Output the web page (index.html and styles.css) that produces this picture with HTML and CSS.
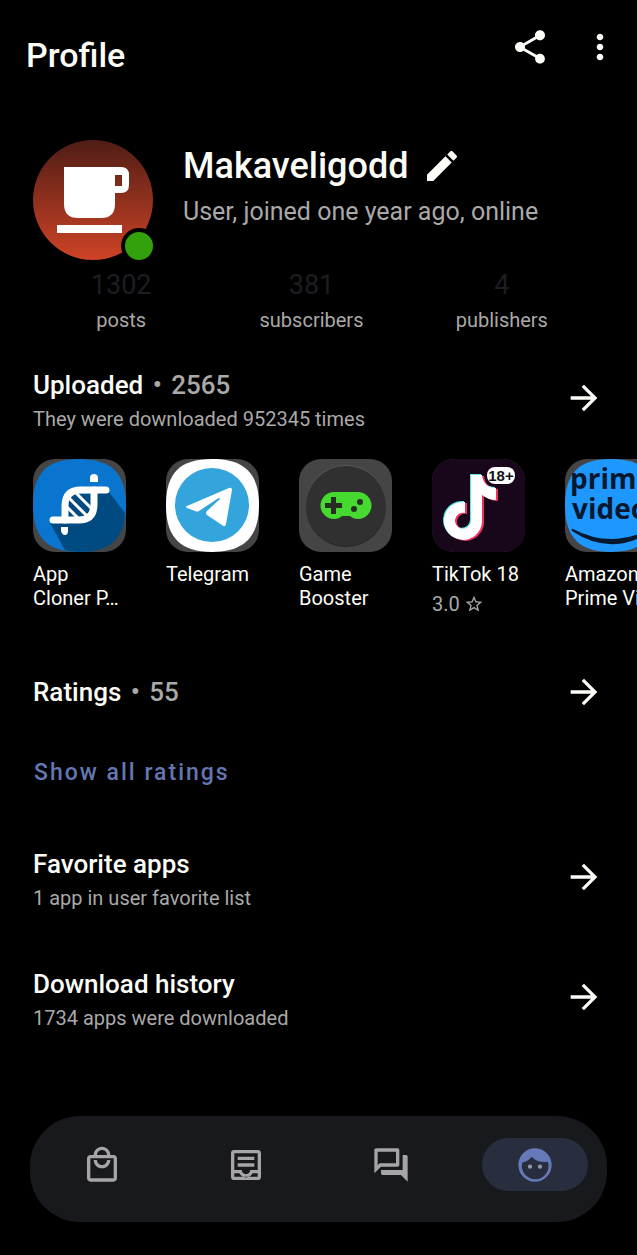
FILE: index.html
```html
<!DOCTYPE html>
<html lang="en">
<head>
  <meta charset="UTF-8">
  <meta name="viewport" content="width=device-width, initial-scale=1.0">
  <title>Profile</title>
  <link rel="stylesheet" href="styles.css">
</head>
<body>
  <header class="topbar">
    <h1>Profile</h1>
    <button class="icon-button" aria-label="Share">
      <svg class="icon" viewBox="0 0 24 24"><path d="M18 16.08c-.76 0-1.44.3-1.96.77L8.91 12.7c.05-.23.09-.46.09-.7s-.04-.47-.09-.7l7.05-4.11c.54.5 1.25.81 2.04.81 1.66 0 3-1.34 3-3s-1.34-3-3-3-3 1.34-3 3c0 .24.04.47.09.7L8.04 9.81C7.5 9.31 6.79 9 6 9c-1.66 0-3 1.34-3 3s1.34 3 3 3c.79 0 1.5-.31 2.04-.81l7.12 4.16c-.05.21-.08.43-.08.65 0 1.61 1.31 2.92 2.92 2.92s2.92-1.31 2.92-2.92-1.31-2.92-2.92-2.92z"/></svg>
    </button>
    <button class="icon-button" aria-label="More options">
      <svg class="icon" viewBox="0 0 24 24"><path d="M12 8c1.1 0 2-.9 2-2s-.9-2-2-2-2 .9-2 2 .9 2 2 2zm0 2c-1.1 0-2 .9-2 2s.9 2 2 2 2-.9 2-2-.9-2-2-2zm0 6c-1.1 0-2 .9-2 2s.9 2 2 2 2-.9 2-2-.9-2-2-2z"/></svg>
    </button>
  </header>

  <main>
    <section class="user">
      <div class="avatar">
        <svg viewBox="0 0 120 120">
          <defs>
            <linearGradient id="avatar-bg" x1="0" y1="0" x2="0" y2="1">
              <stop offset="0" stop-color="#4f1d15"/>
              <stop offset="1" stop-color="#cf4326"/>
            </linearGradient>
          </defs>
          <circle cx="60" cy="60" r="60" fill="url(#avatar-bg)"/>
          <path fill="#fff" fill-rule="evenodd" d="M31 27H88Q96 27 96 35V45Q96 53 88 53H82V64Q82 78 68 78H45Q31 78 31 64ZM82 35V46H89V35Z"/>
          <path fill="#fff" d="M24 85h65v8H24z"/>
        </svg>
        <span class="online"></span>
      </div>
      <div class="user-text">
        <div class="name-row">
          <h2>Makaveligodd</h2>
          <button class="icon-button" aria-label="Edit name">
            <svg class="icon" viewBox="0 0 24 24"><path d="M3 17.25V21h3.75L17.81 9.94l-3.75-3.75L3 17.25zM20.71 7.04c.39-.39.39-1.02 0-1.41l-2.34-2.34c-.39-.39-1.02-.39-1.41 0l-1.83 1.83 3.75 3.75 1.83-1.83z"/></svg>
          </button>
        </div>
        <p>User, joined one year ago, online</p>
      </div>
    </section>

    <section class="stats">
      <div><strong>1302</strong><span>posts</span></div>
      <div><strong>381</strong><span>subscribers</span></div>
      <div><strong>4</strong><span>publishers</span></div>
    </section>

    <section class="row">
      <div>
        <h3>Uploaded <span>•</span> <span>2565</span></h3>
        <p>They were downloaded 952345 times</p>
      </div>
      <button class="icon-button" aria-label="Open uploaded apps">
        <svg class="icon" viewBox="0 0 24 24"><path d="M12 4l-1.41 1.41L16.17 11H4v2h12.17l-5.58 5.59L12 20l8-8z"/></svg>
      </button>
    </section>

    <section class="apps">
      <a class="app" href="#">
        <svg class="app-icon" viewBox="0 0 93 93">
          <path fill="#0a75cf" d="M46 0C78 0 93 14 93 46S78 93 46 93 0 78 0 46 14 0 46 0Z"/>
          <path fill="#004a82" d="M17 64L35 58L58 34L76 33L92 54C91 80 77 93 46 93Q38 93 32 91Z"/>
          <path fill="#004a82" d="M35 35h23v23H35z"/>
          <g fill="none" stroke="#fff" stroke-width="7" stroke-linecap="round">
            <path stroke-width="3" d="M34 48L45 59M35 38L56 59M43 34L59 50"/>
            <path d="M73 31H48Q32 31 32 47V61"/>
            <path d="M20 61H46Q61 61 61 45V31"/>
          </g>
          <path fill="#fff" d="M57 23V19Q57 15 61 15T65 19V23ZM28 68H35V72Q35 76 32 76T28 72Z"/>
        </svg>
        <span class="app-name">App<br>Cloner P…</span>
      </a>
      <a class="app" href="#">
        <svg class="app-icon" viewBox="0 0 93 93">
          <path fill="#fff" d="M46 0C78 0 93 14 93 46S78 93 46 93 0 78 0 46 14 0 46 0Z"/>
          <circle cx="46" cy="46" r="37" fill="#34a4dc"/>
          <path fill="#fff" d="M21 47L63 29Q66 28 66 31L60 65Q59 69 56 66L41 56Q39 54 41 52L54 40Q54 38 51 40L33 52Q31 53 29 52L21 49Q19 48 21 47Z"/>
        </svg>
        <span class="app-name">Telegram</span>
      </a>
      <a class="app" href="#">
        <svg class="app-icon" viewBox="0 0 93 93">
          <circle cx="47" cy="48" r="40" fill="#262626"/>
          <circle cx="47" cy="46" r="40" fill="#555"/>
          <circle cx="47" cy="47" r="40" fill="#303030"/>
          <path fill="#46d92f" d="M35 33H59A13 13 0 0 1 59 60Q54 60 51 57H43Q40 60 35 60A13 13 0 0 1 35 33Z"/>
          <path fill="#262e24" d="M32 38h5v6h6v5h-6v6h-5v-6h-6v-5h6z"/>
          <circle cx="61" cy="43" r="3" fill="#262e24"/>
          <circle cx="55" cy="50" r="3" fill="#262e24"/>
        </svg>
        <span class="app-name">Game<br>Booster</span>
      </a>
      <a class="app" href="#">
        <svg class="app-icon" viewBox="0 0 93 93">
          <defs>
            <path id="note" d="M39 16H50C51 24 56 29 64 29V41C59 41 54 39 50 36V63A19 19 0 1 1 33 43V54A8 8 0 1 0 39 62Z"/>
          </defs>
          <path fill="#18061a" d="M0 0h93v93H0z"/>
          <use href="#note" x="-1" y="-1" fill="#5fe9e6"/>
          <use href="#note" x="2" y="1" fill="#f0315f"/>
          <use href="#note" fill="#fff"/>
          <rect x="53" y="5" width="32" height="22" rx="11" fill="#18061a"/>
          <rect x="55" y="8" width="28" height="17" rx="8" fill="#fff"/>
          <text class="badge-text" x="69" y="22" text-anchor="middle">18+</text>
        </svg>
        <span class="app-name">TikTok 18</span>
        <span class="app-rating">3.0
          <svg viewBox="0 0 24 24"><path d="M22 9.24l-7.19-.62L12 2 9.19 8.63 2 9.24l5.46 4.73L5.82 21 12 17.27 18.18 21l-1.63-7.03L22 9.24zM12 15.4l-3.76 2.27 1-4.28-3.32-2.88 4.38-.38L12 6.1l1.71 4.04 4.38.38-3.32 2.88 1 4.28L12 15.4z"/></svg>
        </span>
      </a>
      <a class="app" href="#">
        <svg class="app-icon" viewBox="0 0 93 93">
          <path fill="#1e98ff" d="M46 0C78 0 93 14 93 46S78 93 46 93 0 78 0 46 14 0 46 0Z"/>
          <text class="prime-text" x="5" y="30">prime</text>
          <text class="prime-text" x="7" y="60">video</text>
          <path fill="#06182f" d="M8 70Q46 90 85 70Q87 71 85 73Q46 98 7 72Q6 69 8 70Z"/>
        </svg>
        <span class="app-name">Amazon<br>Prime Vi…</span>
      </a>
    </section>

    <section class="row ratings">
      <h3>Ratings <span>•</span> <span>55</span></h3>
      <button class="icon-button" aria-label="Open ratings">
        <svg class="icon" viewBox="0 0 24 24"><path d="M12 4l-1.41 1.41L16.17 11H4v2h12.17l-5.58 5.59L12 20l8-8z"/></svg>
      </button>
    </section>
    <button class="show-all">Show all ratings</button>

    <section class="row favorite">
      <div>
        <h3>Favorite apps</h3>
        <p>1 app in user favorite list</p>
      </div>
      <button class="icon-button" aria-label="Open favorite apps">
        <svg class="icon" viewBox="0 0 24 24"><path d="M12 4l-1.41 1.41L16.17 11H4v2h12.17l-5.58 5.59L12 20l8-8z"/></svg>
      </button>
    </section>

    <section class="row history">
      <div>
        <h3>Download history</h3>
        <p>1734 apps were downloaded</p>
      </div>
      <button class="icon-button" aria-label="Open download history">
        <svg class="icon" viewBox="0 0 24 24"><path d="M12 4l-1.41 1.41L16.17 11H4v2h12.17l-5.58 5.59L12 20l8-8z"/></svg>
      </button>
    </section>
  </main>

  <nav class="bottom-nav">
    <a href="#" aria-label="Store">
      <svg class="icon" viewBox="0 0 24 24"><path d="M19 6h-2c0-2.76-2.24-5-5-5S7 3.240 7 6H5c-1.100 0-2 .9-2 2v12c0 1.100.9 2 2 2h14c1.100 0 2-.9 2-2V8c0-1.100-.9-2-2-2zm-7-3c1.660 0 3 1.340 3 3H9c0-1.660 1.340-3 3-3zm7 17H5V8h14v12zm-7-8c-1.660 0-3-1.340-3-3H7c0 2.760 2.240 5 5 5s5-2.240 5-5h-2c0 1.660-1.340 3-3 3z"/></svg>
    </a>
    <a href="#" aria-label="Feed">
      <svg class="icon" viewBox="0 0 24 24"><path fill-rule="evenodd" d="M5 3H19A2 2 0 0 1 21 5V19A2 2 0 0 1 19 21H5A2 2 0 0 1 3 19V5A2 2 0 0 1 5 3ZM5 5V15H9.500C9.500 16.400 10.600 17.500 12 17.500S14.500 16.400 14.500 15H19V5ZM5 17V19H19V17H16C15.200 18.500 13.700 19.500 12 19.500S8.800 18.500 8 17ZM7 7H17V9H7ZM7 11H17V13H7Z"/></svg>
    </a>
    <a href="#" aria-label="Messages">
      <svg class="icon" viewBox="0 0 24 24"><path d="M15 4v7H5.170L4 12.170V4h11m1-2H3c-.55 0-1 .45-1 1v14l4-4h10c.55 0 1-.45 1-1V3c0-.55-.45-1-1-1zm5 4h-2v9H6v2c0 .55.45 1 1 1h11l4 4V7c0-.55-.45-1-1-1z"/></svg>
    </a>
    <a class="active" href="#" aria-label="Profile">
      <svg class="icon" viewBox="0 0 24 24">
        <path fill-rule="evenodd" d="M12 2A10 10 0 1 1 12 22A10 10 0 1 1 12 2ZM10 7C8.800 8.800 6.900 10 4.400 10.500A8 8 0 1 0 19.700 10C15.700 10.600 12.200 9.600 10 7Z"/>
        <circle class="eye" cx="9" cy="13" r="1.250"/>
        <circle class="eye" cx="15" cy="13" r="1.250"/>
      </svg>
    </a>
  </nav>
</body>
</html>
```

FILE: styles.css
```css
* {
  box-sizing: border-box;
}
body {
  font-family: Roboto, "Liberation Sans", sans-serif;
  background-color: #000;
  color: #fdfdf8;
  margin: 0;
  min-height: 100vh;
  display: flex;
  flex-direction: column;
  overflow-x: hidden;
}
h1, h2, h3, p {
  margin: 0;
  font-weight: 500;
}
p {
  font-weight: 400;
  color: #a9a9a9;
}
button {
  font-family: inherit;
  background: none;
  border: none;
  padding: 0;
  color: inherit;
  cursor: pointer;
}
a {
  color: inherit;
  text-decoration: none;
}
svg {
  display: block;
  fill: currentColor;
}
.icon {
  width: 40px;
  height: 40px;
}
.icon-button {
  flex: none;
}

/* top bar */
.topbar {
  display: flex;
  align-items: flex-start;
  gap: 30px;
  padding: 27px 17px 0 26px;
}
h1 {
  flex: 1;
  font-size: 34px;
  line-height: 40px;
  padding-top: 8px;
}

/* user */
.user {
  display: flex;
  gap: 30px;
  padding: 65px 33px 0;
}
.avatar {
  position: relative;
  flex: none;
  width: 120px;
  height: 120px;
}
.online {
  position: absolute;
  right: -4px;
  bottom: -4px;
  width: 36px;
  height: 36px;
  border: 4px solid #000;
  border-radius: 50%;
  background-color: #33a10b;
}
.user-text {
  padding-top: 4px;
}
.name-row {
  display: flex;
  align-items: center;
  gap: 14px;
}
h2 {
  font-size: 36px;
  line-height: 44px;
}
.user-text p {
  font-size: 25px;
  line-height: 32px;
  padding-top: 8px;
}

.stats {
  display: grid;
  grid-template-columns: repeat(3, 1fr);
  padding: 11px 40px 0 26px;
  text-align: center;
}
.stats strong, .stats span {
  display: block;
  line-height: 28px;
}
.stats strong {
  font-size: 27px;
  font-weight: 400;
  color: #1d1d22;
}
.stats span {
  font-size: 20px;
  color: #a9a9a9;
  padding-top: 7px;
}

/* section rows */
.row {
  display: flex;
  justify-content: space-between;
  align-items: flex-start;
  padding: 35px 33px 0;
}
.row .icon-button {
  padding-top: 9px;
}
h3 {
  font-size: 26px;
  line-height: 32px;
}
h3 span {
  color: #a9a9a9;
  padding-left: 3px;
}
.row p {
  font-size: 20px;
  line-height: 24px;
  padding-top: 6px;
}

/* apps */
.apps {
  display: flex;
  gap: 40px;
  padding: 28px 0 0 33px;
  overflow: hidden;
}
.app {
  flex: none;
  width: 93px;
  font-size: 20px;
  line-height: 24px;
}
.app-icon {
  width: 93px;
  height: 93px;
  border-radius: 22px;
  background-color: #454545;
}
.app-name {
  display: block;
  padding-top: 10px;
  white-space: nowrap;
}
.app-rating {
  display: flex;
  align-items: center;
  gap: 4px;
  padding-top: 6px;
  color: #a9a9a9;
}
.app-rating svg {
  width: 20px;
  height: 20px;
}
.badge-text {
  font: bold 15px "Liberation Sans", sans-serif;
  fill: #111;
}
.prime-text {
  font: bold 28px "Open Sans", sans-serif;
  fill: #06182f;
}

.row.ratings {
  align-items: center;
  padding-top: 56px;
}
.ratings .icon-button {
  padding-top: 0;
}
.show-all {
  margin: 45px 34px 0;
  font-size: 23px;
  font-weight: 500;
  line-height: 32px;
  letter-spacing: 2px;
  color: #6377b3;
}
.favorite {
  padding-top: 59px;
}
.history {
  padding-top: 58px;
}

/* bottom navigation */
.bottom-nav {
  display: flex;
  margin: auto 30px 33px;
  padding: 22px 0 31px;
  border-radius: 50px;
  background-color: #18191d;
  color: #a5a5a8;
}
.bottom-nav a {
  flex: 1;
  display: flex;
  justify-content: center;
  align-items: center;
  height: 53px;
}
.bottom-nav .active {
  margin: 0 19px;
  flex: 0 0 106px;
  border-radius: 27px;
  background-color: #282e3d;
  color: #6679b8;
}
.eye {
  fill: #9299ad;
}
```
